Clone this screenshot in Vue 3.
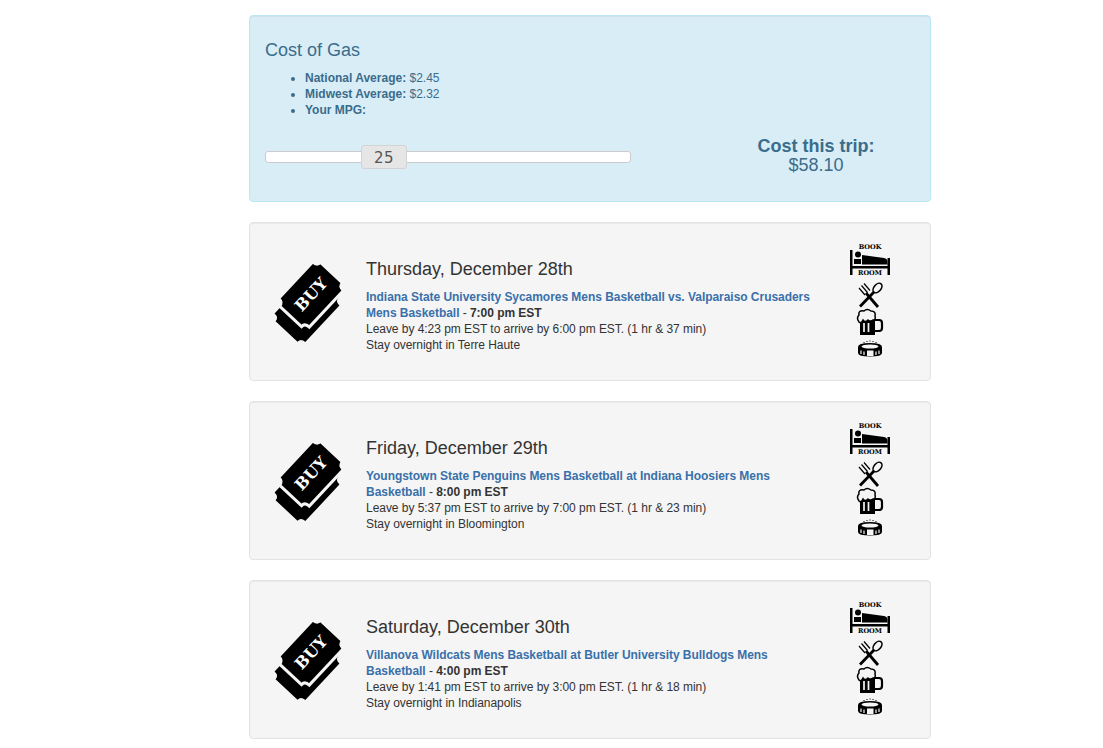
<script setup>
const trips = [
  { day: 'Thursday, December 28th', game: 'Indiana State University Sycamores Mens Basketball vs. Valparaiso Crusaders Mens Basketball', time: '7:00 pm EST', leave: 'Leave by 4:23 pm EST to arrive by 6:00 pm EST. (1 hr & 37 min)', stay: 'Stay overnight in Terre Haute' },
  { day: 'Friday, December 29th', game: 'Youngstown State Penguins Mens Basketball at Indiana Hoosiers Mens Basketball', time: '8:00 pm EST', leave: 'Leave by 5:37 pm EST to arrive by 7:00 pm EST. (1 hr & 23 min)', stay: 'Stay overnight in Bloomington' },
  { day: 'Saturday, December 30th', game: 'Villanova Wildcats Mens Basketball at Butler University Bulldogs Mens Basketball', time: '4:00 pm EST', leave: 'Leave by 1:41 pm EST to arrive by 3:00 pm EST. (1 hr & 18 min)', stay: 'Stay overnight in Indianapolis' },
]
const ticket = 'M-30 -15 Q-25 -15 -25 -21 L25 -21 Q25 -15 30 -15 L30 15 Q25 15 25 21 L-25 21 Q-25 15 -30 15 Z'
</script>

<template>
  <main class="page">
    <section class="panel gas">
      <div class="gas-copy">
        <h3 class="gas-title">Cost of Gas</h3>
        <ul class="prices">
          <li><b>National Average:</b> $2.45</li>
          <li><b>Midwest Average:</b> $2.32</li>
          <li><b>Your MPG:</b></li>
        </ul>
      </div>
      <div class="gas-row">
        <div class="slider">
          <span class="handle">25</span>
        </div>
        <div class="cost">
          <b>Cost this trip:</b>
          <span>$58.10</span>
        </div>
      </div>
    </section>

    <section v-for="trip in trips" :key="trip.day" class="panel trip">
      <svg class="buy" width="76" height="86" viewBox="0 0 76 86">
        <g transform="translate(34 50.500) rotate(-47)">
          <path :d="ticket" fill="#000" />
        </g>
        <g transform="translate(38 35.500) rotate(-47)">
          <path :d="ticket" fill="#000" stroke="#f5f5f5" stroke-width="3" />
          <text x="0" y="5.500" text-anchor="middle" class="buy-text">BUY</text>
        </g>
      </svg>

      <div class="info">
        <h4 class="day">{{ trip.day }}</h4>
        <p class="details">
          <a class="game">{{ trip.game }}</a> - <b>{{ trip.time }}</b><br />
          {{ trip.leave }}<br />
          {{ trip.stay }}
        </p>
      </div>

      <div class="actions">
        <svg class="bed" width="42" height="33" viewBox="0 0 42 33">
          <text x="21" y="5.500" text-anchor="middle" class="tiny">BOOK</text>
          <path d="M1 7h2.500v16H38.500v-8H41v17h-2.500v-6.500H3.500V32H1z" fill="#000" />
          <circle cx="9" cy="11.500" r="3" fill="#000" />
          <path d="M13 12l22 3q3.500 .5 3.500 4v2.500H13z" fill="#000" />
          <path d="M5 16h7v5H5z" fill="#000" />
          <text x="21" y="32" text-anchor="middle" class="tiny">ROOM</text>
        </svg>
        <svg class="cutlery" width="26" height="26" viewBox="0 0 26 26" fill="none" stroke="#000">
          <path d="M9 11L21 25" stroke-width="2.800" />
          <path d="M2 6l6 7M4.500 3.500l6 7M7 1.500l6 7" stroke-width="1.200" />
          <path d="M3 24.500L17 10" stroke-width="2.800" />
          <ellipse cx="20.500" cy="6" rx="3.500" ry="5.500" transform="rotate(40 20.500 6)" fill="#f5f5f5" stroke-width="1.600" />
        </svg>
        <svg class="beer" width="28" height="28" viewBox="0 0 28 28">
          <path d="M4 11h15v16H4z" fill="#000" />
          <path d="M8 15v9M12.500 15v9" stroke="#f5f5f5" stroke-width="1.700" />
          <path d="M19 12h4q3 0 3 3v5q0 3-3 3h-4" fill="none" stroke="#000" stroke-width="2.200" />
          <path d="M3 14Q0 10 3 7Q2 2 8 3Q11 0 15 3Q20 3 19 8Q20 12 17 12Q15 14 12 12Q9 15 7 12Q5 16 3 14Z" fill="#f5f5f5" stroke="#000" stroke-width="1.500" />
        </svg>
        <svg class="stadium" width="26" height="17" viewBox="0 0 26 17">
          <path d="M1 7Q1 3 13 3T25 7V13Q25 16.500 13 16.500T1 13Z" fill="#000" />
          <ellipse cx="13" cy="6.500" rx="8.500" ry="2" fill="#f5f5f5" />
          <path d="M7 11.500v3.500M4 10.500v3.500M22 10.500v3.500M19 11.500v3.500" stroke="#f5f5f5" stroke-width="1.200" />
          <path d="M10 10.500h6.500v5.500H10z" fill="#f5f5f5" />
          <path d="M7 2v1M10 1v1M13 .5v1M16 1v1M19 2v1" stroke="#000" stroke-width="1" />
        </svg>
      </div>
    </section>
  </main>
</template>

<style scoped>
.page {
  width: 682px;
  margin-left: 249px;
  padding: 15px 0 9px;
  display: flex;
  flex-direction: column;
  gap: 20px;
  font-family: "Liberation Sans", Arial, sans-serif;
  font-size: 12px;
  line-height: 16px;
  color: #333;
}
.panel {
  box-sizing: border-box;
  border: 1px solid #e3e3e3;
  border-radius: 4px;
  background: #f5f5f5;
  box-shadow: inset 0 1px 1px rgba(0, 0, 0, 0.05);
}
.gas {
  height: 187px;
  padding: 24px 15px 0;
  background: #d9edf7;
  border-color: #bce8f1;
  color: #3a6c8b;
}
.gas-title {
  margin: 0;
  font-size: 18px;
  font-weight: 400;
  line-height: 20px;
}
.prices {
  margin: 10px 0 0;
  padding-left: 40px;
}
.gas-row {
  display: flex;
  margin-top: 20px;
}
.slider {
  position: relative;
  box-sizing: border-box;
  width: 366px;
  height: 12px;
  margin-top: 13px;
  background: #fff;
  border: 1px solid #ccc;
  border-radius: 3px;
}
.handle {
  position: absolute;
  left: 95px;
  top: -7px;
  box-sizing: border-box;
  width: 46px;
  height: 24px;
  border: 1px solid #d3d3d3;
  border-radius: 3px;
  background: #e6e6e6;
  color: #555;
  font-family: "DejaVu Sans", sans-serif;
  font-size: 15px;
  letter-spacing: 0.5px;
  line-height: 24px;
  text-align: center;
}
.cost {
  flex: 1;
  margin-top: -1px;
  padding-left: 86px;
  display: flex;
  flex-direction: column;
  align-items: center;
  font-size: 18px;
  line-height: 19px;
}
.trip {
  height: 159px;
  display: flex;
  align-items: flex-start;
  padding-left: 23px;
  padding-top: 20px;
}
.buy {
  flex: none;
  margin-top: 16px;
}
.buy-text {
  fill: #fff;
  font-family: "DejaVu Serif", serif;
  font-weight: 700;
  font-size: 16px;
}
.info {
  flex: none;
  width: 450px;
  margin-left: 17px;
  padding-top: 16px;
  letter-spacing: -0.04px;
}
.day {
  margin: 0 0 10px;
  font-size: 18px;
  font-weight: 400;
  line-height: 20px;
  letter-spacing: 0;
}
.details {
  margin: 0;
}
.game {
  color: #3a70aa;
  font-weight: 700;
}
.actions {
  display: flex;
  flex-direction: column;
  align-items: center;
  width: 42px;
  margin-left: 33px;
}
.actions svg {
  display: block;
}
.bed {
  margin-bottom: 6px;
}
.beer {
  margin-bottom: 4px;
}
.tiny {
  fill: #000;
  font-family: "DejaVu Serif", serif;
  font-weight: 700;
  font-size: 6.500px;
}
</style>
